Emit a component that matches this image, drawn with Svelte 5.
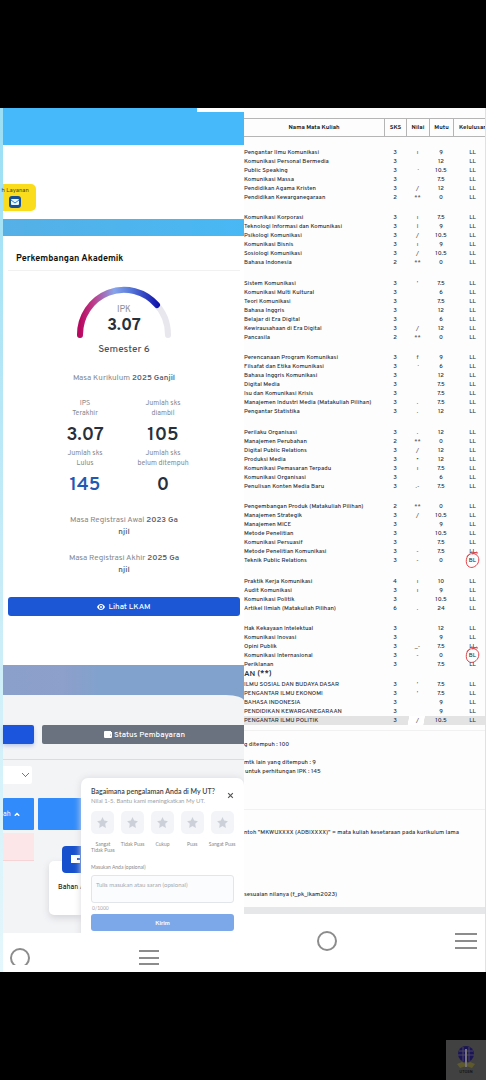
<script lang="ts">
  type Row = [name: string, sks: number, mark: string, mutu: string, status?: string];

  const semesters: Row[][] = [
    [
      ['Pengantar Ilmu Komunikasi', 3, 'ı', '9'],
      ['Komunikasi Personal Bermedia', 3, '', '12'],
      ['Public Speaking', 3, '·', '10.5'],
      ['Komunikasi Massa', 3, '', '7.5'],
      ['Pendidikan Agama Kristen', 3, '/', '12'],
      ['Pendidikan Kewarganegaraan', 2, '**', '0'],
    ],
    [
      ['Komunikasi Korporasi', 3, 'ı', '7.5'],
      ['Teknologi Informasi dan Komunikasi', 3, 'l', '9'],
      ['Psikologi Komunikasi', 3, '/', '10.5'],
      ['Komunikasi Bisnis', 3, 'ı', '9'],
      ['Sosiologi Komunikasi', 3, '/', '10.5'],
      ['Bahasa Indonesia', 2, '**', '0'],
    ],
    [
      ['Sistem Komunikasi', 3, "'", '7.5'],
      ['Komunikasi Multi Kultural', 3, '', '6'],
      ['Teori Komunikasi', 3, '', '7.5'],
      ['Bahasa Inggris', 3, '', '12'],
      ['Belajar di Era Digital', 3, '', '6'],
      ['Kewirausahaan di Era Digital', 3, '/', '12'],
      ['Pancasila', 2, '**', '0'],
    ],
    [
      ['Perencanaan Program Komunikasi', 3, 'f', '9'],
      ['Filsafat dan Etika Komunikasi', 3, '·', '6'],
      ['Bahasa Inggris Komunikasi', 3, '', '12'],
      ['Digital Media', 3, '', '7.5'],
      ['Isu dan Komunikasi Krisis', 3, '', '7.5'],
      ['Manajemen Industri Media (Matakuliah Pilihan)', 3, '.', '7.5'],
      ['Pengantar Statistika', 3, '.', '12'],
    ],
    [
      ['Perilaku Organisasi', 3, '.', '12'],
      ['Manajemen Perubahan', 2, '**', '0'],
      ['Digital Public Relations', 3, '/', '12'],
      ['Produksi Media', 3, '•', '12'],
      ['Komunikasi Pemasaran Terpadu', 3, 'ı', '7.5'],
      ['Komunikasi Organisasi', 3, '', '6'],
      ['Penulisan Konten Media Baru', 3, '.-', '7.5'],
    ],
    [
      ['Pengembangan Produk (Matakuliah Pilihan)', 2, '**', '0'],
      ['Manajemen Strategik', 3, '/', '10.5'],
      ['Manajemen MICE', 3, '', '9'],
      ['Metode Penelitian', 3, '', '10.5'],
      ['Komunikasi Persuasif', 3, '', '7.5'],
      ['Metode Penelitian Komunikasi', 3, '-', '7.5'],
      ['Teknik Public Relations', 3, '-', '0', 'BL'],
    ],
    [
      ['Praktik Kerja Komunikasi', 4, 'ı', '10'],
      ['Audit Komunikasi', 3, 'ı', '9'],
      ['Komunikasi Politik', 3, '', '10.5'],
      ['Artikel Ilmiah (Matakuliah Pilihan)', 6, '.', '24'],
    ],
    [
      ['Hak Kekayaan Intelektual', 3, '', '12'],
      ['Komunikasi Inovasi', 3, '', '9'],
      ['Opini Publik', 3, '_-', '7.5'],
      ['Komunikasi Internasional', 3, '-', '0', 'BL'],
      ['Periklanan', 3, '', '7.5'],
    ],
  ];

  const equivalents: Row[] = [
    ['ILMU SOSIAL DAN BUDAYA DASAR', 3, "'", '7.5'],
    ['PENGANTAR ILMU EKONOMI', 3, "'", '7.5'],
    ['BAHASA INDONESIA', 3, '', '9'],
    ['PENDIDIKAN KEWARGANEGARAAN', 3, '', '9'],
    ['PENGANTAR ILMU POLITIK', 3, '/', '10.5'],
  ];

  const stats = [
    { label: ['IPS', 'Terakhir'], value: '3.07' },
    { label: ['Jumlah sks', 'diambil'], value: '105' },
    { label: ['Jumlah sks', 'Lulus'], value: '145', accent: true },
    { label: ['Jumlah sks', 'belum ditempuh'], value: '0' },
  ];

  const ratings = ['Sangat Tidak Puas', 'Tidak Puas', 'Cukup', 'Puas', 'Sangat Puas'];

  let rating = $state(0);
  let feedback = $state('');
</script>

{#snippet courseRow([name, sks, mark, mutu, status = 'LL']: Row, last = false)}
  <tr class:shaded={last}>
    <td class="name">{name}</td>
    <td>{sks}</td>
    <td class="mark">{mark}</td>
    <td>{mutu}</td>
    <td class="status">
      {status}
      {#if status === 'BL'}
        <svg class="circled" viewBox="0 0 16 18" aria-hidden="true">
          <path d="M5 3 C1 5 0 12 3 15 C6 18 11 16 13 12 C15 8 13 4 10 3 C7 2 3 3 2 6 M6 1 L13 2 M7 3 L12 1" />
        </svg>
      {/if}
    </td>
  </tr>
{/snippet}

<main class="screen">
  <div class="split">
    <section class="portal">
      <div class="banner"><span></span></div>
      <div class="services">
        <button class="service">
          <span>h Layanan</span>
          <svg viewBox="0 0 12 12" aria-hidden="true">
            <rect width="12" height="12" rx="3" fill="#174f96" />
            <rect x="2" y="3" width="8" height="6" rx="1" fill="#e9f5ff" />
            <path d="M2 4 L6 7 L10 4" fill="none" stroke="#2d7fc4" />
          </svg>
        </button>
      </div>
      <div class="stripe"></div>

      <article class="progress">
        <h2>Perkembangan Akademik</h2>
        <div class="gauge">
          <svg viewBox="0 0 98 54" aria-hidden="true">
            <defs>
              <linearGradient id="arc" gradientUnits="userSpaceOnUse" x1="5" y1="0" x2="86" y2="0">
                <stop offset="0" stop-color="#b80860" />
                <stop offset="0.16" stop-color="#bd3a88" />
                <stop offset="0.42" stop-color="#88a4ea" />
                <stop offset="0.6" stop-color="#5c7fdc" />
                <stop offset="1" stop-color="#0808a8" />
              </linearGradient>
            </defs>
            <path d="M5 49 A44 45 0 0 1 93 49" stroke="#e7e7ed" />
            <path d="M5 49 A44 45 0 0 1 82 19" stroke="url(#arc)" />
          </svg>
          <p><span>IPK</span><strong>3.07</strong></p>
        </div>
        <p class="semester">Semester 6</p>
        <p class="info">Masa Kurikulum <b>2025 Ganjil</b></p>
        <dl class="stats">
          {#each stats as { label, value, accent }}
            <div>
              <dt>{label[0]}<br />{label[1]}</dt>
              <dd class:accent>{value}</dd>
            </div>
          {/each}
        </dl>
        <p class="info period">Masa Registrasi Awal <b>2023 Ga<br />njil</b></p>
        <p class="info period">Masa Registrasi Akhir <b>2025 Ga<br />njil</b></p>
        <button class="primary">
          <svg viewBox="0 0 16 12" aria-hidden="true">
            <path d="M8 0 C4 0 1 3 0 6 C1 9 4 12 8 12 C12 12 15 9 16 6 C15 3 12 0 8 0 Z" fill="#fff" />
            <circle cx="8" cy="6" r="4" fill="#1c57d6" />
            <circle cx="8" cy="6" r="2" fill="#fff" />
          </svg>
          Lihat LKAM
        </button>
      </article>

      <div class="lower">
        <div class="sheet">
          <div class="tabs">
            <button class="tab active" aria-label="Status Registrasi"></button>
            <button class="tab">
              <svg viewBox="0 0 16 14" aria-hidden="true">
                <path d="M2 0 H14 V2 H16 V12 A2 2 0 0 1 14 14 H2 A2 2 0 0 1 0 12 V2 A2 2 0 0 1 2 0 Z" fill="#fff" />
                <circle cx="13" cy="8" r="1" fill="#6b7280" />
              </svg>
              Status Pembayaran
            </button>
          </div>
          <select aria-label="Masa"></select>
          <div class="bills">
            <div class="head">ah
              <svg viewBox="0 0 8 6" aria-hidden="true"><path d="M1 5 L4 2 L7 5" fill="none" stroke="#fff" stroke-width="2" /></svg>
            </div>
            <div class="head"></div>
            <div class="due"></div>
            <div class="material">
              <svg viewBox="0 0 27 27" aria-hidden="true">
                <rect width="27" height="27" rx="4" fill="#1650cc" />
                <path d="M9 9 H18 V17 H9 Z" fill="#fff" />
                <path d="M15 12 H19 V14 H15 Z" fill="#1650cc" />
              </svg>
              <span>Bahan Ajar</span>
            </div>
          </div>

          <form class="feedback" onsubmit={(e) => e.preventDefault()}>
            <header>
              <div>
                <h3>Bagaimana pengalaman Anda di My UT?</h3>
                <p>Nilai 1-5. Bantu kami meningkatkan My UT.</p>
              </div>
              <button type="button" class="close" aria-label="Tutup">
                <svg viewBox="0 0 6 6" aria-hidden="true"><path d="M1 1 L5 5 M5 1 L1 5" stroke="#555" /></svg>
              </button>
            </header>
            <div class="ratings">
              {#each ratings as label, i}
                <button type="button" class:picked={rating === i + 1} onclick={() => (rating = i + 1)}>
                  <span class="star">
                    <svg viewBox="0 0 24 24" aria-hidden="true">
                      <path d="M12 2 L15 8.500 L22 9.500 L17 14.500 L18.200 22 L12 18.500 L5.800 22 L7 14.500 L2 9.500 L9 8.500 Z" />
                    </svg>
                  </span>
                  <span>{label}</span>
                </button>
              {/each}
            </div>
            <label for="feedback">Masukan Anda (opsional)</label>
            <textarea id="feedback" maxlength="1000" placeholder="Tulis masukan atau saran (opsional)" bind:value={feedback}></textarea>
            <small>{feedback.length}/1000</small>
            <button class="send">Kirim</button>
          </form>
        </div>
      </div>

      <nav class="nav">
        <button aria-label="Beranda" class="cut"><svg viewBox="0 0 22 22"><circle cx="11" cy="11" r="9" /></svg></button>
        <button aria-label="Menu" class="cut"><svg viewBox="0 0 22 22"><path d="M1 4 H21 M1 11 H21 M1 17 H21" /></svg></button>
      </nav>
    </section>

    <section class="transcript">
      <table>
        <thead>
          <tr>
            <th class="title">Nama Mata Kuliah</th>
            <th class="c1">SKS</th>
            <th class="c2">Nilai</th>
            <th class="c3">Mutu</th>
            <th class="c4">Kelulusan</th>
          </tr>
        </thead>
        <tbody class="lead"><tr><td colspan="5"></td></tr></tbody>
        {#each semesters as rows, i}
          <tbody>
            {#if i > 0}
              <tr class="gap" class:wide={i % 2 === 0}><td colspan="5"></td></tr>
            {/if}
            {#each rows as row}
              {@render courseRow(row)}
            {/each}
          </tbody>
        {/each}
        <tbody>
          <tr class="heading"><th colspan="5">AN (**)</th></tr>
          {#each equivalents as row, i}
            {@render courseRow(row, i === equivalents.length - 1)}
          {/each}
        </tbody>
      </table>

      <div class="notes">
        <p>g ditempuh : 100</p>
        <p>mtk lain yang ditempuh : 9</p>
        <p class="sum">untuk perhitungan IPK : 145</p>
        <p class="legend">ntoh "MKWUXXXX (ADBIXXXX)" = mata kuliah kesetaraan pada kurikulum lama</p>
        <p class="file">sesuaian nilanya (f_pk_lkam2023)</p>
      </div>

      <nav class="nav">
        <button aria-label="Beranda"><svg viewBox="0 0 22 22"><circle cx="11" cy="11" r="9" /></svg></button>
        <button aria-label="Menu"><svg viewBox="0 0 22 22"><path d="M0 4 H22 M0 11 H22 M0 18 H22" /></svg></button>
      </nav>
    </section>
  </div>

  <div class="logo">
    <svg viewBox="0 0 40 30" role="img" aria-label="UT">
      <circle cx="20" cy="14" r="8" fill="#1c1555" />
      <path d="M13 11 H27 M12 15 H28 M17 7 V21 M23 7 V21" stroke="#4a4763" fill="none" />
      <path d="M11 24 L16 22 L20 24 L24 22 L29 24 L26 28 L20 26 L14 28 Z" fill="#5f5a2e" />
      <path d="M20 9 V27" stroke="#77747c" stroke-width="2" />
    </svg>
    <span>UTOSN</span>
  </div>
</main>

<style>
  :global(body) {
    margin: 0;
    background: #000;
  }
  .screen {
    min-height: 100vh;
    box-sizing: border-box;
    padding-top: 108px;
    background: #000;
    font-family: Overpass, 'Open Sans', sans-serif;
    color: #27303b;
  }
  h2, h3, p, dl, dd {
    margin: 0;
  }
  button, select, textarea {
    box-sizing: border-box;
    margin: 0;
    padding: 0;
    border: 0;
    font: inherit;
    color: inherit;
  }
  button {
    cursor: pointer;
  }
  svg {
    display: block;
  }
  .split {
    display: grid;
    grid-template-columns: 244fr 242fr;
    background: #fff;
  }

  .portal {
    display: flex;
    flex-direction: column;
    min-width: 0;
    overflow: hidden;
    box-sizing: border-box;
    padding-left: 3px;
    background: linear-gradient(#9adff5, #c4ebf8 50%, #e4f7fc);
  }
  .banner {
    display: flex;
    justify-content: flex-end;
    height: 37px;
    background: #46b9fa;
  }
  .banner span {
    width: 47px;
    height: 4px;
    background: #fff;
  }
  .services {
    height: 35px;
    padding-top: 39px;
    background: #fff;
  }
  .service {
    display: flex;
    flex-direction: column;
    align-items: center;
    gap: 1px;
    width: 33px;
    height: 27px;
    padding-top: 3px;
    border-radius: 0 5px 5px 0;
    background: #fbdc1c;
    font-size: 6px;
    line-height: 8px;
    color: #4d4618;
    white-space: nowrap;
  }
  .service span {
    align-self: flex-end;
    margin-right: 7px;
  }
  .service svg {
    width: 12px;
    margin-right: 10px;
  }
  .stripe {
    height: 17px;
    background: linear-gradient(90deg, #55b0e6, #48b8f4);
  }
  .progress {
    display: flex;
    flex-direction: column;
    align-items: center;
    padding: 13px 4px 49px 5px;
    background: #fff;
    text-align: center;
  }
  h2 {
    align-self: stretch;
    padding: 3px 8px 4px;
    border-bottom: 1px solid #f1f1f1;
    font-size: 9px;
    line-height: 14px;
    font-weight: 700;
    text-align: left;
    color: #111;
  }
  .gauge {
    position: relative;
    width: 98px;
    margin-top: 15px;
  }
  .gauge path {
    fill: none;
    stroke-width: 6;
    stroke-linecap: round;
  }
  .gauge p {
    position: absolute;
    inset: 18px 0 auto;
    display: flex;
    flex-direction: column;
  }
  .gauge span {
    font-size: 9px;
    line-height: 12px;
    color: #8d9096;
  }
  .gauge strong {
    font-size: 17px;
    line-height: 20px;
    font-weight: 700;
  }
  .semester {
    margin-top: 4px;
    font-size: 10px;
    line-height: 12px;
    font-weight: 500;
    color: #4b535e;
  }
  .info {
    margin-top: 16px;
    font-size: 8px;
    line-height: 12px;
    color: #85888e;
  }
  .info b {
    font-weight: 600;
    color: #5a5f69;
  }
  .stats {
    display: grid;
    grid-template-columns: 78px 78px;
    margin: 15px 0 8px;
  }
  .stats div {
    height: 50px;
  }
  dt {
    font-size: 7px;
    line-height: 10px;
    color: #85888e;
    white-space: nowrap;
  }
  dd {
    font-size: 19px;
    line-height: 32px;
    font-weight: 600;
  }
  dd.accent {
    color: #1f59b5;
  }
  .period {
    margin: 7px 0;
  }
  .primary {
    display: flex;
    align-items: center;
    justify-content: center;
    gap: 3px;
    width: 100%;
    height: 19px;
    margin-top: 14px;
    border-radius: 3px;
    background: #1c57d6;
    font-size: 8px;
    font-weight: 500;
    color: #fff;
  }
  .primary svg {
    width: 8px;
  }

  .lower {
    padding-top: 30px;
    background: linear-gradient(90deg, #8ba0cb, #8d9fcb 25%, #81a2cd 40%);
  }
  .sheet {
    position: relative;
    height: 208px;
    padding-top: 30px;
    border-radius: 0 18px 0 0 / 0 6px 0 0;
    background: #f3f4f6;
  }
  .tabs {
    display: flex;
    gap: 8px;
    padding-bottom: 15px;
    border-bottom: 1px solid #dadcdf;
  }
  .tab {
    display: flex;
    align-items: center;
    justify-content: center;
    gap: 2px;
    flex: 1;
    height: 19px;
    padding-left: 3px;
    border-radius: 2px 0 0 2px;
    background: #6a7280;
    font-size: 8px;
    font-weight: 500;
    color: #fff;
  }
  .tab svg {
    width: 8px;
  }
  .tab.active {
    flex: 0 0 31px;
    border-radius: 0 2px 2px 0;
    background: #1b55dd;
    box-shadow: 0 2px 4px #b9c8ea;
  }
  select {
    display: block;
    width: 29px;
    height: 18px;
    margin-top: 6px;
    border-radius: 0 2px 2px 0;
    appearance: none;
    background:
      linear-gradient(45deg, transparent 45%, #777 45% 60%, transparent 60%) 19px 7px / 4px 4px no-repeat,
      linear-gradient(-45deg, transparent 45%, #777 45% 60%, transparent 60%) 22px 7px / 4px 4px no-repeat,
      #fff;
  }
  .bills {
    display: grid;
    grid-template-columns: 31px 1fr;
    column-gap: 4px;
    row-gap: 3px;
    margin-top: 14px;
  }
  .head {
    display: flex;
    align-items: center;
    gap: 3px;
    height: 32px;
    border-radius: 1px;
    background: #318bfb;
    font-size: 7px;
    color: #fff;
  }
  .head svg {
    width: 6px;
  }
  .due {
    height: 27px;
    border-bottom: 1px solid #f7d3d6;
    background: #fce6e8;
  }
  .material {
    align-self: start;
    margin: 28px 0 0 11px;
    padding: 0 9px 20px;
    width: 100px;
    border-radius: 5px;
    background: #fff;
    box-shadow: 0 3px 7px #d4d5d9;
    font-size: 7px;
    line-height: 14px;
    font-weight: 500;
    color: #222;
  }
  .material svg {
    width: 27px;
    margin: -15px 0 8px 4px;
  }

  .feedback {
    position: absolute;
    top: 83px;
    right: 0;
    bottom: -7px;
    width: 163px;
    box-sizing: border-box;
    padding: 7px 10px 0;
    border-radius: 7px 7px 0 0;
    background: #fff;
    box-shadow: 0 0 7px #d8dade;
    font-family: Lato, sans-serif;
  }
  .feedback header {
    display: flex;
    justify-content: space-between;
    align-items: center;
  }
  h3 {
    font-size: 7px;
    line-height: 12px;
    font-weight: 600;
    color: #444;
    white-space: nowrap;
  }
  .feedback header p {
    font-size: 6px;
    line-height: 8px;
    color: #a2a2a2;
    white-space: nowrap;
  }
  .close {
    background: none;
  }
  .close svg {
    width: 7px;
  }
  .ratings {
    display: grid;
    grid-template-columns: repeat(5, 1fr);
    margin: 6px -3px 0;
    height: 50px;
  }
  .ratings button {
    display: flex;
    flex-direction: column;
    align-items: center;
    gap: 7px;
    background: none;
    font-size: 5px;
    line-height: 6px;
    color: #888;
  }
  .ratings button:first-child span:last-child {
    padding: 0 2px;
  }
  .star {
    display: grid;
    place-items: center;
    width: 23px;
    height: 23px;
    border-radius: 5px;
    background: #f2f4f7;
  }
  .star svg {
    width: 13px;
    fill: #ccd1d9;
  }
  .picked .star svg {
    fill: #fbbf24;
  }
  .feedback label {
    display: block;
    padding: 2px 0 4px;
    font-size: 5px;
    line-height: 8px;
    color: #888;
  }
  textarea {
    display: block;
    width: 100%;
    height: 28px;
    padding: 5px 4px;
    border: 1px solid #e2e5ea;
    border-radius: 3px;
    resize: none;
    background: #fbfcfd;
    font-size: 6px;
    line-height: 8px;
  }
  textarea::placeholder {
    color: #a5a9b0;
  }
  small {
    display: block;
    padding: 1px 1px 2px;
    font-size: 5px;
    line-height: 8px;
    color: #aaa;
  }
  .send {
    display: block;
    width: 100%;
    height: 17px;
    border-radius: 3px;
    background: #7ca7e9;
    font-size: 6px;
    font-weight: 700;
    color: #fff;
  }

  .nav {
    display: flex;
    justify-content: space-between;
    align-items: center;
    background: #fff;
  }
  .nav button {
    overflow: hidden;
    background: none;
  }
  .nav svg {
    width: 22px;
    fill: none;
    stroke: #8c8c8c;
    stroke-width: 2;
  }
  .portal .nav {
    position: relative;
    align-items: flex-start;
    height: 25px;
    padding: 14px 84px 0 6px;
  }
  .nav .cut {
    height: 18px;
  }

  .transcript {
    display: flex;
    flex-direction: column;
    min-width: 0;
    overflow: hidden;
    box-sizing: border-box;
    border-right: 1px solid #c9eaf3;
    background: #fdfdfd;
  }
  table {
    width: calc(100% + 7px);
    margin-top: 10px;
    border-collapse: separate;
    border-spacing: 0;
    table-layout: fixed;
    font-size: 6px;
    line-height: 9px;
    font-weight: 500;
    text-align: center;
  }
  td {
    height: 9px;
    padding: 0;
    white-space: nowrap;
  }
  thead th {
    box-sizing: border-box;
    height: 19px;
    padding: 0;
    border: solid #b5b5b5;
    border-width: 1px 0 1px 1px;
    font-weight: 700;
    color: #222;
  }
  thead .title {
    border-left: 0;
  }
  .c1 { width: 22px; }
  .c2 { width: 23px; }
  .c3 { width: 24px; }
  .c4 { width: 39px; }
  .lead td {
    height: 11px;
  }
  .gap td {
    height: 11px;
  }
  .gap.wide td {
    height: 12px;
  }
  .name {
    text-align: left;
  }
  .mark {
    color: #555;
  }
  .status {
    position: relative;
  }
  .circled {
    position: absolute;
    inset: -5px auto auto 12px;
    width: 16px;
    fill: none;
    stroke: #e0424a;
  }
  .heading th {
    height: 11px;
    padding: 0;
    font-size: 8px;
    font-weight: 600;
    text-align: left;
  }
  .shaded td {
    background: #e3e3e3;
  }
  .shaded .mark {
    background: linear-gradient(100deg, #e3e3e3 12%, #fff 14% 76%, #e3e3e3 78%);
  }
  .notes {
    flex: 1;
    margin-top: 5px;
    border-bottom: 7px solid #e5e7e8;
    font-size: 6px;
    line-height: 9px;
    font-weight: 500;
    color: #333;
    white-space: nowrap;
  }
  .notes p {
    padding-top: 9px;
  }
  .notes p:first-child {
    border-top: 1px solid #f1f1f1;
  }
  .notes .sum {
    padding: 0 1px 33px;
    border-bottom: 1px solid #f1f1f1;
  }
  .notes .legend {
    padding-top: 18px;
  }
  .notes .file {
    padding-top: 53px;
  }
  .transcript .nav {
    height: 54px;
    padding: 0 8px 4px 72px;
  }

  .logo {
    display: flex;
    flex-direction: column;
    align-items: center;
    width: 40px;
    height: 40px;
    margin: 68px 0 0 auto;
    background: #414141;
  }
  .logo svg {
    width: 40px;
  }
  .logo span {
    font-size: 4px;
    line-height: 5px;
    font-weight: 700;
    color: #151515;
  }
</style>
